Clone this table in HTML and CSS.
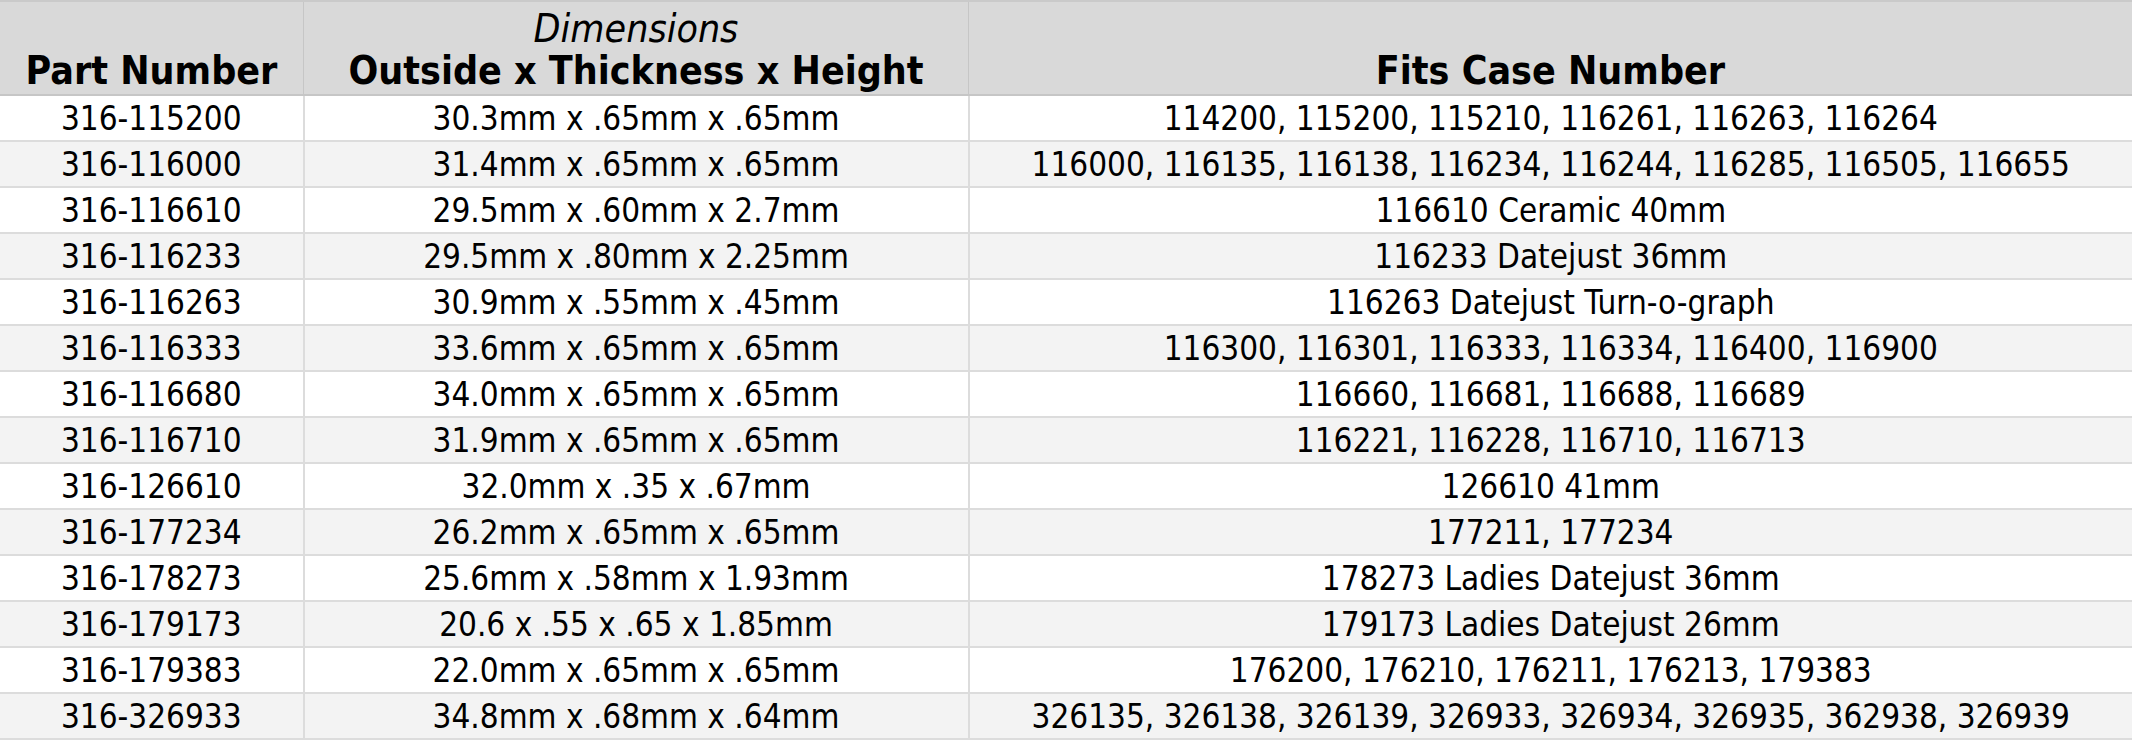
FILE: index.html
```html
<!DOCTYPE html>
<html>
<head>
<meta charset="utf-8">
<link rel="stylesheet" href="styles.css">
</head>
<body>
<table class="parts">
  <thead>
    <tr>
      <th class="col-part">Part Number</th>
      <th class="col-dim"><span class="dim-label">Dimensions</span><br>Outside x Thickness x Height</th>
      <th class="col-fits">Fits Case Number</th>
    </tr>
  </thead>
  <tbody>
    <tr><td>316-115200</td><td>30.3mm x .65mm x .65mm</td><td>114200, 115200, 115210, 116261, 116263, 116264</td></tr>
    <tr><td>316-116000</td><td>31.4mm x .65mm x .65mm</td><td>116000, 116135, 116138, 116234, 116244, 116285, 116505, 116655</td></tr>
    <tr><td>316-116610</td><td>29.5mm x .60mm x 2.7mm</td><td>116610 Ceramic 40mm</td></tr>
    <tr><td>316-116233</td><td>29.5mm x .80mm x 2.25mm</td><td>116233 Datejust 36mm</td></tr>
    <tr><td>316-116263</td><td>30.9mm x .55mm x .45mm</td><td>116263 Datejust Turn-o-graph</td></tr>
    <tr><td>316-116333</td><td>33.6mm x .65mm x .65mm</td><td>116300, 116301, 116333, 116334, 116400, 116900</td></tr>
    <tr><td>316-116680</td><td>34.0mm x .65mm x .65mm</td><td>116660, 116681, 116688, 116689</td></tr>
    <tr><td>316-116710</td><td>31.9mm x .65mm x .65mm</td><td>116221, 116228, 116710, 116713</td></tr>
    <tr><td>316-126610</td><td>32.0mm x .35 x .67mm</td><td>126610 41mm</td></tr>
    <tr><td>316-177234</td><td>26.2mm x .65mm x .65mm</td><td>177211, 177234</td></tr>
    <tr><td>316-178273</td><td>25.6mm x .58mm x 1.93mm</td><td>178273 Ladies Datejust 36mm</td></tr>
    <tr><td>316-179173</td><td>20.6 x .55 x .65 x 1.85mm</td><td>179173 Ladies Datejust 26mm</td></tr>
    <tr><td>316-179383</td><td>22.0mm x .65mm x .65mm</td><td>176200, 176210, 176211, 176213, 179383</td></tr>
    <tr><td>316-326933</td><td>34.8mm x .68mm x .64mm</td><td>326135, 326138, 326139, 326933, 326934, 326935, 362938, 326939</td></tr>
  </tbody>
</table>
</body>
</html>
```
FILE: styles.css
```css
html, body {
  margin: 0;
  padding: 0;
  background: #ffffff;
}
.parts {
  width: 2132px;
  border-collapse: collapse;
  table-layout: fixed;
  font-family: "DejaVu Sans Condensed", "DejaVu Sans", sans-serif;
  color: #000;
}
.parts th {
  background: #d9d9d9;
  font-weight: bold;
  font-size: 39px;
  line-height: 42px;
  height: 90px;
  vertical-align: bottom;
  text-align: center;
  padding: 0 0 2px 0;
  border: 1px solid #c6c6c6;
  border-bottom: 2px solid #c6c6c6;
  border-top: 2px solid #cacaca;
}
.parts th:first-child { border-left: none; }
.parts th:last-child { border-right: none; }
.col-part { width: 303px; }
.col-dim { width: 664px; }
.dim-label {
  font-weight: normal;
  font-style: italic;
}
.parts td {
  font-size: 33px;
  height: 44px;
  padding: 0;
  text-align: center;
  vertical-align: middle;
  border: 2px solid #dcdcdc;
  white-space: nowrap;
}
.parts td:first-child { border-left: none; }
.parts td:last-child { border-right: none; }
.parts tbody tr:nth-child(even) td { background: #f3f3f3; }
```
